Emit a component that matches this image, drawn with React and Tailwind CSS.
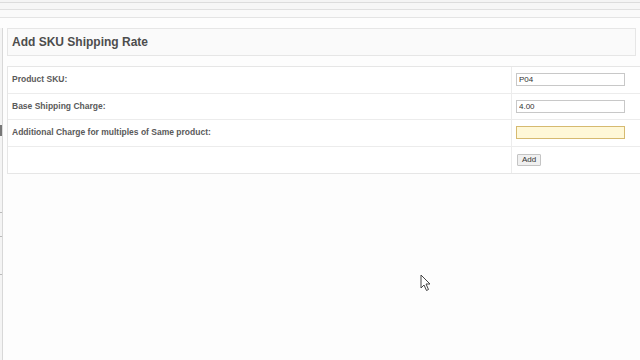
// Admin form: add a per-SKU shipping rate.
export default function App() {
  const rows = [
    { label: 'Product SKU:', value: 'P04' },
    { label: 'Base Shipping Charge:', value: '4.00' },
    { label: 'Additional Charge for multiples of Same product:', value: '', focus: true },
  ]

  return (
    <div className="relative w-[640px] h-[360px] overflow-hidden bg-[#fdfdfd] font-['Liberation_Sans',Arial,sans-serif] text-[#555]">
      {/* browser / admin chrome strips */}
      <div className="h-[3px] bg-[#f4f4f4] border-b border-[#dcdcdc]" />
      <div className="h-[7px] bg-[#f6f6f6] border-b border-[#e0e0e0]" />
      <div className="h-[8px] bg-[#fafafa] border-b border-[#e4e4e4]" />

      <div className="flex mt-[10px]">
        {/* left sidebar edge */}
        <div className="w-[3px] h-[340px] flex flex-col border-r border-[#d8d8d8] bg-[#f4f4f4]">
          <div className="h-[97px]" />
          <div className="h-[11px] border border-[#777] bg-[#eee]" />
          <div className="h-[76px]" />
          <div className="h-[1px] bg-[#bbb]" />
          <div className="h-[23px]" />
          <div className="h-[1px] bg-[#bbb]" />
          <div className="h-[37px]" />
          <div className="h-[1px] bg-[#bbb]" />
        </div>

        <div className="flex-1 pl-[4px]">
          <div className="h-[28px] mr-[4px] bg-[#fafafa] border border-[#e6e6e6] flex items-center pl-[4px]">
            <h1 className="text-[12px] font-bold text-[#4d4d4d]">Add SKU Shipping Rate</h1>
          </div>

          <div className="mt-[10px] border-t border-b border-l border-[#e6e6e6] bg-white">
            {rows.map((r, i) => (
              <div key={i} className="flex h-[26.5px] border-b border-[#ececec]">
                <div className="w-[504px] border-r border-[#ececec] flex items-center pl-[4px] text-[8.5px] font-bold text-[#5a5a5a]">
                  {r.label}
                </div>
                <div className="flex-1 flex items-center pl-[4px]">
                  <input
                    readOnly
                    value={r.value}
                    className={
                      r.focus
                        ? 'w-[109px] h-[13px] px-[2px] text-[8px] bg-[#fff8d8] border border-[#d6ba70] outline-none'
                        : 'w-[109px] h-[13px] px-[2px] text-[8px] text-[#333] bg-white border border-[#c8c8c8] outline-none'
                    }
                  />
                </div>
              </div>
            ))}
            <div className="flex h-[26px]">
              <div className="w-[504px] border-r border-[#ececec]" />
              <div className="flex-1 flex items-center pl-[5px]">
                <button className="h-[12px] px-[4px] text-[8px] leading-none text-[#333] bg-[#f0f0f0] border border-[#c4c4c4] rounded-[1px]">
                  Add
                </button>
              </div>
            </div>
          </div>
        </div>
      </div>

      {/* mouse pointer */}
      <svg width="13" height="18" viewBox="0 0 13 18" className="absolute left-[420px] top-[274px]">
        <path d="M1 1 L1 14 L4 11 L6.5 16.5 L8.5 15.5 L6 10 L10 10 Z" fill="#fff" stroke="#444" strokeWidth="1" strokeLinejoin="round" />
      </svg>
    </div>
  )
}
